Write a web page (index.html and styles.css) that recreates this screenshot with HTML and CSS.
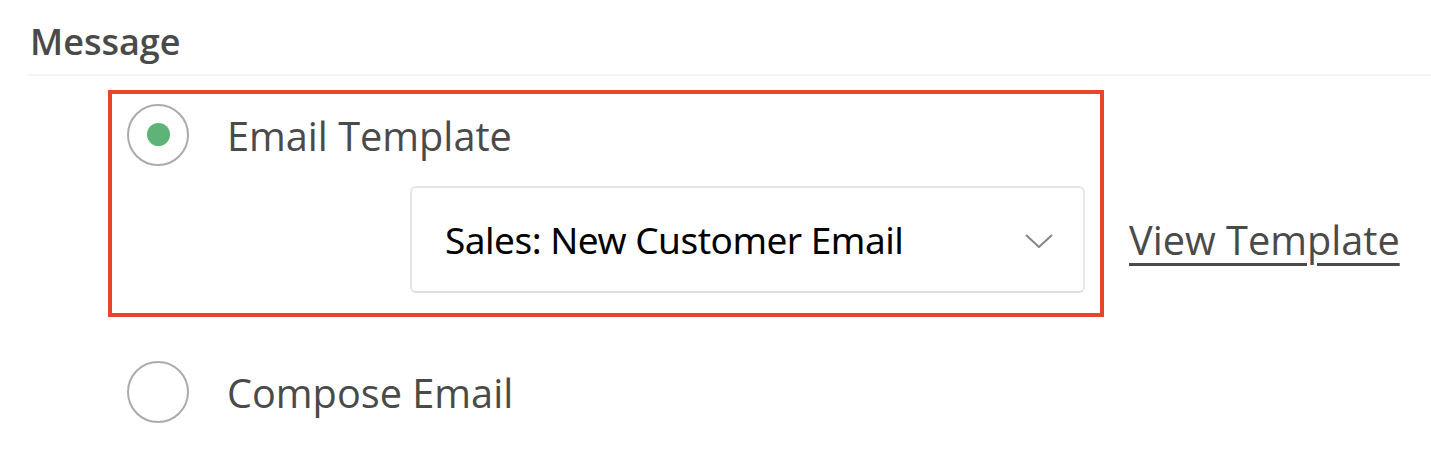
FILE: index.html
```html
<!DOCTYPE html>
<html lang="en">
<head>
  <meta charset="UTF-8" />
  <meta name="viewport" content="width=device-width, initial-scale=1.0"/>
  <title>Message</title>
  <link rel="stylesheet" href="styles.css">
</head>
<body>

<section class="field">
  <h2 class="field-title">Message</h2>

  <div class="options">
    <div class="highlight"></div>

    <label class="option">
      <span class="radio checked"></span>
      <span class="option-label">Email Template</span>
    </label>

    <div class="template-row">
      <div class="select">
        <span class="select-value">Sales: New Customer Email</span>
        <svg class="chevron" width="28" height="14" viewBox="0 0 28 14">
          <path d="M1 1 L14 13 L27 1" fill="none" stroke="#7d8790" stroke-width="2"/>
        </svg>
      </div>
      <a href="#" class="view-link">View Template</a>
    </div>

    <label class="option compose">
      <span class="radio"></span>
      <span class="option-label">Compose Email</span>
    </label>
  </div>
</section>

</body>
</html>
```

FILE: styles.css
```css
body { margin: 0; padding: 0; background: #fff; font-family: "Open Sans", sans-serif; color: #4a4a4a; }

.field { padding-left: 28px; }
.field-title {
  margin: 0; padding: 18px 0 0 2px; height: 56px;
  font-size: 36px; font-weight: 600; line-height: 48px;
  border-bottom: 2px solid #f4f4f4;
}

.options { position: relative; padding: 27px 0 30px 127px; margin-left: -28px; }

/* annotation box over the selected option */
.highlight {
  position: absolute; left: 108px; top: 14px;
  width: 988px; height: 219px;
  border: 4px solid #e8452b;
}

.option { display: flex; align-items: center; gap: 38px; height: 63px; }
.option-label { font-size: 39.7px; line-height: 63px; padding-top: 3px; }
.compose { margin-top: 67px; }

.radio {
  width: 58px; height: 58px; border-radius: 50%;
  border: 2.5px solid #ababab;
  display: flex; align-items: center; justify-content: center;
  flex-shrink: 0;
}
.radio.checked::after {
  content: ""; width: 23px; height: 23px; border-radius: 50%; background: #5db378;
}

.template-row { display: flex; align-items: center; gap: 44px; margin-top: 20px; margin-left: 283px; }
.select {
  box-sizing: border-box; width: 675px; height: 107px;
  border: 2px solid #e6e6e6; border-bottom-color: #dedede; border-radius: 6px;
  display: flex; align-items: center; justify-content: space-between;
  padding: 0 30px 0 33px;
}
.select-value { color: #000; font-family: "Noto Sans", sans-serif; font-size: 37px; letter-spacing: -0.5px; }
.chevron { display: block; margin-top: 2px; }

.view-link { color: #4a4a4a; font-size: 39.7px; text-decoration: underline; text-decoration-thickness: 3px; text-underline-offset: 8px; }
```
